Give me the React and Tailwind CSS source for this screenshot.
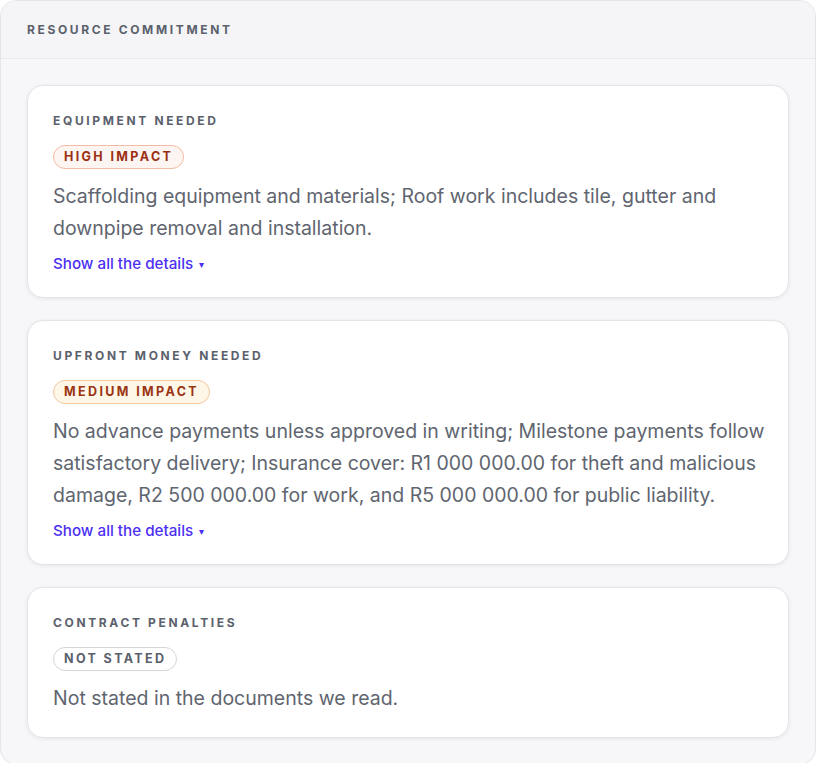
import React from "react";

const items = [
  {
    id: "equipment",
    label: "Equipment needed",
    impact: "high",
    text: "Scaffolding equipment and materials; Roof work includes tile, gutter and downpipe removal and installation.",
    details: true,
  },
  {
    id: "money",
    label: "Upfront money needed",
    impact: "medium",
    text: "No advance payments unless approved in writing; Milestone payments follow satisfactory delivery; Insurance cover: R1 000 000.00 for theft and malicious damage, R2 500 000.00 for work, and R5 000 000.00 for public liability.",
    details: true,
  },
  {
    id: "penalties",
    label: "Contract penalties",
    impact: "none",
    text: "Not stated in the documents we read.",
    details: false,
  },
];

const badgeStyles = {
  high: { text: "High impact", className: "border-[#f3bba3] bg-[#fdf5f2] text-[#9b2f12]" },
  medium: { text: "Medium impact", className: "border-[#f5c69f] bg-[#fef7e7] text-[#9a3412]" },
  none: { text: "Not stated", className: "border-[#d4d5da] bg-white text-[#5b616c]" },
};

const ImpactBadge = ({ impact }) => {
  const { text, className } = badgeStyles[impact];
  return (
    <span
      className={`inline-flex h-[24px] items-center rounded-full border px-[10px] text-[12.5px] font-bold uppercase tracking-[0.19em] ${className}`}
    >
      {text}
    </span>
  );
};

const CommitmentCard = ({ label, impact, text, details }) => (
  <div className="rounded-[16px] border border-[#e3e4e8] bg-white pl-[25px] pr-[14px] pt-[27px] pb-[23px] shadow-[0_1px_4px_rgba(0,0,0,0.07)]">
    <h3 className="text-[12px] font-bold uppercase leading-[16px] tracking-[0.22em] text-[#5b616c]">
      {label}
    </h3>
    <div className="mt-[16px] flex">
      <ImpactBadge impact={impact} />
    </div>
    <p className="mt-[11px] text-[19.5px] leading-[32px] text-[#60656f]">{text}</p>
    {details && (
      <button className="mt-[10px] flex h-[20px] items-center gap-[6px] text-[15.2px] font-medium text-[#4c2ff2]">
        Show all the details
        <span className="text-[10px]">▾</span>
      </button>
    )}
  </div>
);

const App = () => {
  return (
    <div
      className="min-h-[763px] w-[816px] overflow-hidden rounded-[16px] border border-[#e4e5e9] bg-[#f7f7f9]"
      style={{ fontFamily: "Inter, 'Noto Sans', sans-serif" }}
    >
      <div className="flex h-[58px] items-center border-b border-[#e8e9ec] bg-[#f5f5f7] px-[26px]">
        <h2 className="text-[12px] font-bold uppercase tracking-[0.22em] text-[#5b616c]">
          Resource commitment
        </h2>
      </div>
      <div className="flex flex-col gap-[22px] px-[26px] pt-[26px] pb-[26px]">
        {items.map((item) => (
          <CommitmentCard key={item.id} {...item} />
        ))}
      </div>
    </div>
  );
};

export default App;
